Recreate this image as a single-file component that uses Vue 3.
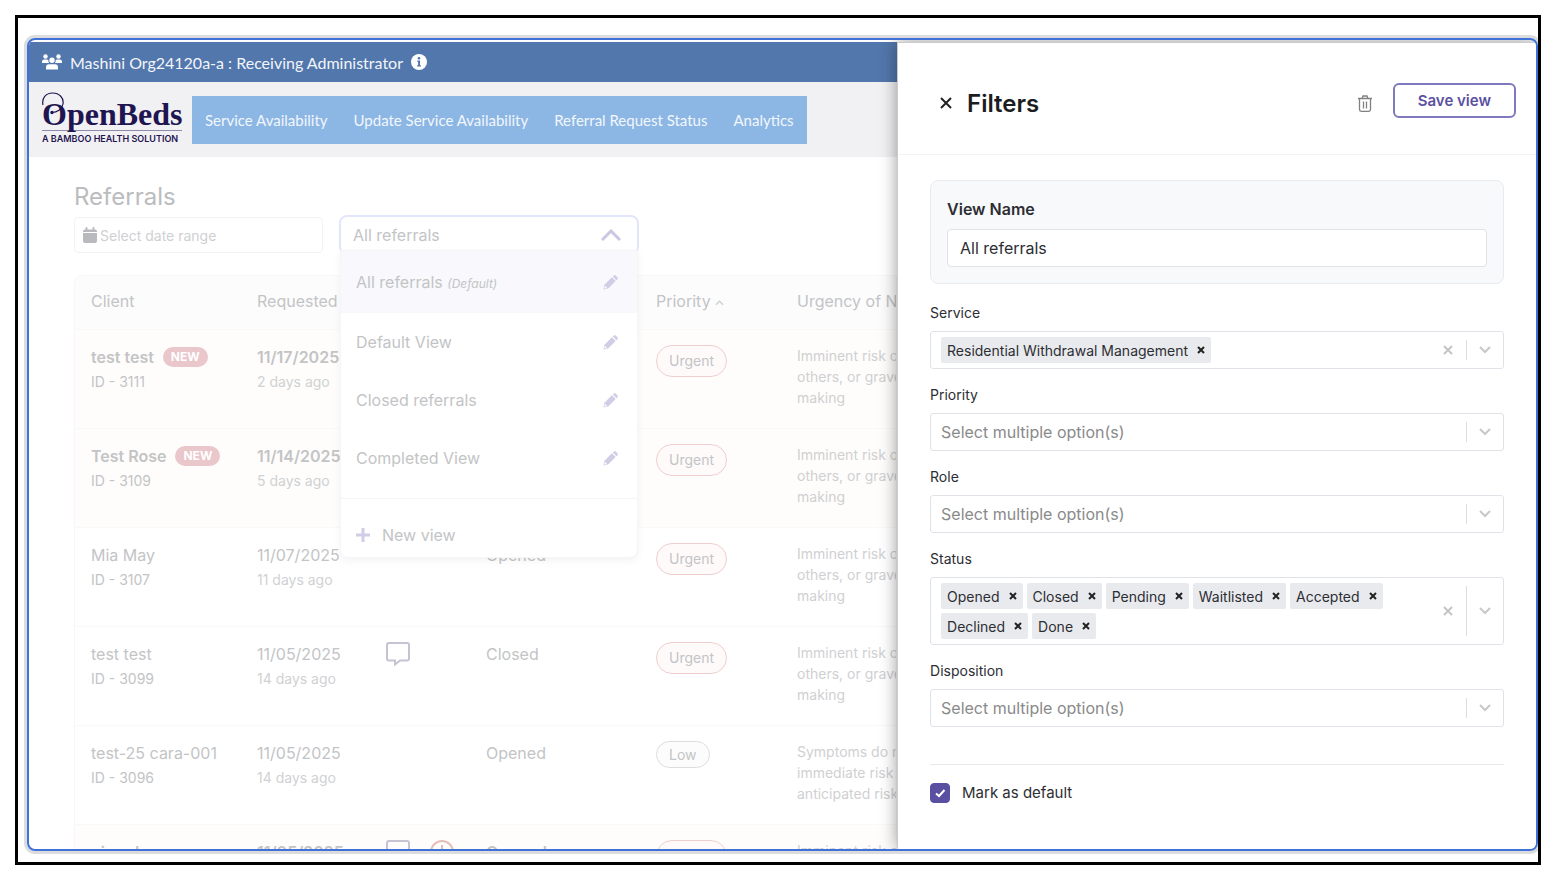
<script setup>
import { ref } from 'vue'

const navLinks = ['Service Availability', 'Update Service Availability', 'Referral Request Status', 'Analytics']

const views = [
  { name: 'All referrals', isDefault: true },
  { name: 'Default View' },
  { name: 'Closed referrals' },
  { name: 'Completed View' },
]

const imminent = ['Imminent risk of', 'others, or grave', 'making']

const referrals = [
  { name: 'test test', id: 'ID - 3111', date: '11/17/2025', ago: '2 days ago', status: 'Opened', priority: 'Urgent', urgency: imminent, isNew: true, unread: true },
  { name: 'Test Rose', id: 'ID - 3109', date: '11/14/2025', ago: '5 days ago', status: 'Opened', priority: 'Urgent', urgency: imminent, isNew: true, unread: true },
  { name: 'Mia May', id: 'ID - 3107', date: '11/07/2025', ago: '11 days ago', status: 'Opened', priority: 'Urgent', urgency: imminent },
  { name: 'test test', id: 'ID - 3099', date: '11/05/2025', ago: '14 days ago', status: 'Closed', priority: 'Urgent', urgency: imminent, message: true },
  { name: 'test-25 cara-001', id: 'ID - 3096', date: '11/05/2025', ago: '14 days ago', status: 'Opened', priority: 'Low', urgency: ['Symptoms do not', 'immediate risk', 'anticipated risk'] },
  { name: 'nirmala', id: 'ID - 3095', date: '11/05/2025', ago: '14 days ago', status: 'Opened', priority: 'Urgent', urgency: imminent, message: true, alert: true, unread: true },
]

const filters = ref([
  { label: 'Service', values: ['Residential Withdrawal Management'] },
  { label: 'Priority', values: [] },
  { label: 'Role', values: [] },
  { label: 'Status', values: ['Opened', 'Closed', 'Pending', 'Waitlisted', 'Accepted', 'Declined', 'Done'] },
  { label: 'Disposition', values: [] },
])

const viewName = ref('All referrals')
const markDefault = ref(true)

// remove one chip from a filter
const removeValue = (filter, value) => {
  filter.values = filter.values.filter((v) => v !== value)
}
</script>

<template>
  <div class="frame">
    <div class="window">
      <div class="main">
        <header class="orgbar">
          <svg class="users" viewBox="0 0 20 16" fill="#fff">
            <circle cx="3.5" cy="2.5" r="2.2" />
            <circle cx="16.5" cy="2.5" r="2.2" />
            <circle cx="10" cy="6.2" r="2.7" />
            <path d="M0 9V7.6Q0 5.4 2.2 5.4H4.8Q6 5.4 6.3 6.2Q6.2 7.9 7.2 9ZM20 9V7.6Q20 5.4 17.8 5.4H15.2Q14 5.4 13.7 6.2Q13.8 7.9 12.8 9ZM4 15.5V13.5Q4 10.2 7 10.2H13Q16 10.2 16 13.5V15.5Z" />
          </svg>
          <span>Mashini Org24120a-a : Receiving Administrator</span>
          <svg class="info" viewBox="0 0 16 16">
            <circle cx="8" cy="8" r="8" fill="#fff" />
            <path d="M6.3 6.5H9V11.2H10V12.5H6.2V11.2H7.1V7.8H6.3Z" fill="#5277ac" />
            <circle cx="8" cy="4.3" r="1.3" fill="#5277ac" />
          </svg>
        </header>

        <div class="navbar">
          <div class="logo">
            <svg class="logo-loop" viewBox="0 0 24 26" fill="none" stroke="#1f1550">
              <path d="M1 13C-.5 6 4 1 10.500 1C17.500 1 22 6 21 12C20 17.500 15 20.500 10 20.500" stroke-width="1.2" />
              <circle cx="10" cy="20.5" r="1.7" fill="#1f1550" stroke="none" />
            </svg>
            <span class="logo-name">OpenBeds</span>
            <span class="logo-tag">A BAMBOO HEALTH SOLUTION</span>
          </div>
          <nav>
            <a v-for="link in navLinks" :key="link" href="#">{{ link }}</a>
          </nav>
        </div>

        <main class="content">
          <h1>Referrals</h1>
          <div class="toolbar">
            <label class="date">
              <svg viewBox="0 0 14 16" fill="#b9babd">
                <path d="M0 4.500Q0 2.500 2 2.500H2.500V1Q2.500 0 3.500 0T4.500 1V2.500H9.500V1Q9.500 0 10.500 0T11.500 1V2.500H12Q14 2.500 14 4.500V5H0ZM0 6H14V14Q14 16 12 16H2Q0 16 0 14Z" />
              </svg>
              <input type="text" aria-label="Date range" placeholder="Select date range" />
            </label>
            <div class="picker">
              <button class="picker-toggle">
                <span>All referrals</span>
                <svg viewBox="0 0 20 12" fill="none" stroke="#cbc7e2" stroke-width="3">
                  <path d="M1 11L10 2L19 11" />
                </svg>
              </button>
              <div class="menu">
                <button v-for="view in views" :key="view.name" class="menu-item" :class="{ active: view.isDefault }">
                  <span>{{ view.name }} <em v-if="view.isDefault">(Default)</em></span>
                  <svg viewBox="0 0 16 16" fill="#d0cde6">
                    <path d="M1.500 10.500L9.500 2.500L13.500 6.500L5.500 14.500L.5 15.500ZM10.500 1.700L11.800.5Q12.600-.3 13.500.5L15.400 2.400Q16.300 3.300 15.500 4.200L14.300 5.500Z" />
                    <path d="M2 11.500L4.500 14L1.500 14.500Z" fill="#fff" />
                  </svg>
                </button>
                <button class="menu-new">
                  <svg viewBox="0 0 14 14" stroke="#d0cde6" stroke-width="3">
                    <path d="M7 0V14M0 7H14" />
                  </svg>
                  <span>New view</span>
                </button>
              </div>
            </div>
          </div>

          <div class="table-box">
            <table>
              <thead>
                <tr>
                  <th class="c-client">Client</th>
                  <th class="c-date">Requested</th>
                  <th class="c-icons"></th>
                  <th class="c-status">Status</th>
                  <th class="c-priority">
                    Priority
                    <svg viewBox="0 0 10 6" fill="none" stroke="#cfd0d2" stroke-width="1.5"><path d="M1 5L5 1L9 5" /></svg>
                  </th>
                  <th>Urgency of Need</th>
                </tr>
              </thead>
              <tbody>
                <tr v-for="row in referrals" :key="row.id" :class="{ unread: row.unread }">
                  <td>
                    <div class="line">{{ row.name }}<span v-if="row.isNew" class="new">NEW</span></div>
                    <div class="sub">{{ row.id }}</div>
                  </td>
                  <td>
                    <div class="line">{{ row.date }}</div>
                    <div class="sub ago">{{ row.ago }}</div>
                  </td>
                  <td>
                    <div class="icons">
                      <svg v-if="row.message" viewBox="0 0 24 24" fill="none" stroke="#c6c3d2" stroke-width="2">
                        <path d="M3 1H21Q23 1 23 3V16.500Q23 18.500 21 18.500H14L9 22.500V18.500H3Q1 18.500 1 16.500V3Q1 1 3 1Z" />
                      </svg>
                      <svg v-if="row.alert" viewBox="0 0 24 24" fill="none" stroke="#e5bdb8" stroke-width="2">
                        <circle cx="12" cy="12" r="11" />
                        <path d="M12 5V14M12 16.500V19" />
                      </svg>
                    </div>
                  </td>
                  <td><div class="line">{{ row.status }}</div></td>
                  <td><span class="pill" :class="{ low: row.priority === 'Low' }">{{ row.priority }}</span></td>
                  <td class="urgency"><div v-for="text in row.urgency" :key="text">{{ text }}</div></td>
                </tr>
              </tbody>
            </table>
          </div>
        </main>
      </div>

      <aside class="panel">
        <div class="panel-head">
          <button aria-label="Close">
            <svg class="close" viewBox="0 0 12 12" stroke="#222" stroke-width="2"><path d="M1 1L11 11M11 1L1 11" /></svg>
          </button>
          <h2>Filters</h2>
          <button aria-label="Delete view">
            <svg class="trash" viewBox="0 0 14 17" fill="none" stroke="#818181" stroke-width="1.3">
              <path d="M0 3.500H14M4 3.500L5 1H9L10 3.500M1.500 3.500V14.500Q1.500 16.300 3.300 16.300H10.700Q12.500 16.300 12.500 14.500V3.500M5.500 6.500V13.500M8.500 6.500V13.500" />
            </svg>
          </button>
          <button class="save">Save view</button>
        </div>

        <div class="panel-body">
          <div class="view-name">
            <label for="view-name">View Name</label>
            <input id="view-name" v-model="viewName" type="text" />
          </div>

          <div v-for="filter in filters" :key="filter.label" class="field">
            <label :for="filter.label">{{ filter.label }}</label>
            <div class="multi">
              <div class="values">
                <span v-for="value in filter.values" :key="value" class="chip">
                  {{ value }}
                  <button :aria-label="'Remove ' + value" @click="removeValue(filter, value)">
                    <svg viewBox="0 0 8 8" stroke="#222" stroke-width="2"><path d="M1 1L7 7M7 1L1 7" /></svg>
                  </button>
                </span>
                <input :id="filter.label" type="text" :placeholder="filter.values.length ? '' : 'Select multiple option(s)'" :class="{ filled: filter.values.length }" />
              </div>
              <button v-if="filter.values.length" class="clear" aria-label="Clear" @click="filter.values = []">
                <svg viewBox="0 0 10 10" stroke="#c4c4c4" stroke-width="2"><path d="M1 1L9 9M9 1L1 9" /></svg>
              </button>
              <span class="separator"></span>
              <button class="arrow" aria-label="Open">
                <svg viewBox="0 0 12 8" fill="none" stroke="#c8c8c8" stroke-width="2"><path d="M1 1L6 6L11 1" /></svg>
              </button>
            </div>
          </div>

          <label class="default">
            <input v-model="markDefault" type="checkbox" />
            <svg viewBox="0 0 20 20" fill="none" stroke="#fff" stroke-width="2"><path d="M6 10.500L9 13L14.500 7" /></svg>
            Mark as default
          </label>
        </div>
      </aside>
    </div>
  </div>
</template>

<style>
body {
  margin: 0;
  background: #fff;
}
</style>

<style scoped>
* {
  box-sizing: border-box;
}

button {
  font: inherit;
  color: inherit;
  background: none;
  border: none;
  padding: 0;
  display: flex;
  align-items: center;
}

input {
  font: inherit;
  color: inherit;
  background: none;
  border: none;
  padding: 0;
  min-width: 0;
  outline: none;
}

svg {
  display: block;
  flex: none;
}

.frame {
  height: calc(100vh - 28px);
  margin: 15px 5px 13px 15px;
  padding: 20px 0 11px 9px;
  border: 3px solid #000;
  display: flex;
  overflow: hidden;
  font-family: Inter, "Liberation Sans", sans-serif;
  font-size: 16px;
}

.window {
  flex: 1;
  min-width: 0;
  display: flex;
  overflow: hidden;
  border: 2px solid #3f72d8;
  border-radius: 8px;
  box-shadow: 0 0 0 3px #dcdcde;
}

.main {
  flex: 1;
  min-width: 0;
  padding-top: 2px;
  overflow: hidden;
}

.orgbar {
  height: 40px;
  padding: 0 13px;
  display: flex;
  align-items: center;
  gap: 8px;
  color: #f2f5fa;
  background: #5277ac;
  font-family: Lato, sans-serif;
}

.orgbar span {
  white-space: nowrap;
}

.users {
  width: 20px;
  height: 16px;
}

.info {
  width: 16px;
  height: 16px;
}

.navbar {
  height: 75px;
  padding: 0 13px;
  display: flex;
  align-items: center;
  gap: 10px;
  background: #f1f1f4;
}

.logo {
  position: relative;
  width: 140px;
  padding-top: 6px;
  color: #1f1550;
  display: flex;
  flex-direction: column;
}

.logo-loop {
  position: absolute;
  left: 0;
  top: 0;
  width: 24px;
  height: 26px;
}

.logo-name {
  font-family: "Liberation Serif", serif;
  font-weight: bold;
  font-size: 32px;
  line-height: 32px;
  border-bottom: 1px solid #8f8aa8;
}

.logo-tag {
  font-size: 9px;
  font-weight: 600;
  line-height: 16px;
  white-space: nowrap;
}

nav {
  height: 48px;
  padding: 0 13px;
  display: flex;
  align-items: center;
  gap: 26px;
  background: #8cb6e4;
}

nav a {
  color: #f2f7fd;
  font-family: Lato, sans-serif;
  font-size: 15px;
  text-decoration: none;
  white-space: nowrap;
}

.content {
  padding: 25px 0 0 45px;
  color: #c3c4c6;
}

h1 {
  margin: 0;
  font-size: 24px;
  font-weight: 400;
  line-height: 30px;
  color: #bbbcbe;
}

.toolbar {
  display: flex;
  align-items: flex-start;
  gap: 16px;
  margin-top: 3px;
}

.date {
  width: 249px;
  height: 36px;
  margin-top: 2px;
  padding: 0 8px;
  display: flex;
  align-items: center;
  gap: 3px;
  border: 1px solid #f3f3f5;
  border-radius: 4px;
  font-size: 14px;
}

.date svg {
  width: 14px;
  height: 16px;
}

.date input {
  flex: 1;
}

.date input::placeholder {
  color: #cfd0d2;
}

.picker {
  position: relative;
  width: 300px;
}

.picker-toggle {
  width: 100%;
  height: 40px;
  padding: 0 16px 0 12px;
  justify-content: space-between;
  border: 2px solid #e2e6fb;
  border-radius: 8px;
}

.picker-toggle svg {
  width: 20px;
  height: 12px;
}

.menu {
  position: absolute;
  z-index: 1;
  top: 35px;
  left: 1px;
  right: 1px;
  background: #fff;
  border: 1px solid #f5f5f7;
  border-radius: 0 0 8px 8px;
  box-shadow: 0 3px 8px rgba(0, 0, 0, 0.05);
}

.menu-item {
  width: 100%;
  height: 58px;
  padding: 0 19px 0 15px;
  justify-content: space-between;
}

.menu-item.active {
  height: 62px;
  background: #f8f8fd;
}

.menu-item em {
  font-size: 12px;
}

.menu-item svg {
  width: 15px;
  height: 15px;
}

.menu-new {
  width: 100%;
  height: 59px;
  margin-top: 11px;
  padding: 14px 15px 0;
  gap: 12px;
  border-top: 1px solid #f5f5f6;
}

.menu-new svg {
  width: 14px;
  height: 14px;
}

.table-box {
  margin-top: 20px;
  border: 1px solid #f7f7f8;
  border-radius: 8px 0 0 0;
  overflow: hidden;
}

table {
  width: 100%;
  border-collapse: collapse;
  table-layout: fixed;
}

th {
  height: 53px;
  padding: 0 0 2px 16px;
  background: #fcfcfd;
  font-weight: 400;
  text-align: left;
  white-space: nowrap;
}

th svg {
  display: inline-block;
  width: 9px;
  height: 6px;
  vertical-align: middle;
}

.c-client {
  width: 166px;
}

.c-date {
  width: 129px;
}

.c-icons {
  width: 100px;
}

.c-status {
  width: 170px;
}

.c-priority {
  width: 141px;
}

td {
  height: 99px;
  padding: 15px 0 0 16px;
  border-top: 1px solid #f8f8f8;
  vertical-align: top;
  white-space: nowrap;
}

.unread td {
  background: #fefdfb;
}

.line {
  display: flex;
  align-items: center;
  gap: 9px;
  line-height: 24px;
}

.unread .line {
  font-weight: 600;
}

.sub {
  font-size: 14px;
  line-height: 26px;
}

.ago {
  color: #d0d1d3;
}

.new {
  padding: 0 8px;
  border-radius: 10px;
  background: #e9c7ca;
  color: #fff;
  font-size: 12px;
  font-weight: 700;
  line-height: 20px;
}

.icons {
  display: flex;
  gap: 20px;
}

.icons svg {
  width: 24px;
  height: 24px;
}

.pill {
  display: inline-block;
  padding: 0 12px;
  border: 1px solid #efcfcd;
  border-radius: 16px;
  background: #fefafa;
  font-size: 14px;
  line-height: 30px;
}

.pill.low {
  border-color: #dcdde0;
  background: #fcfcfc;
  line-height: 25px;
}

.urgency {
  color: #cfd0d2;
  font-size: 14px;
  line-height: 21px;
}

.panel {
  position: relative;
  width: 42.4%;
  margin-top: 2px;
  flex: none;
  background: #fff;
  border-top: 1px solid #ccc;
  border-left: 1px solid #ccc;
  box-shadow: 0 0 16px rgba(0, 0, 0, 0.4);
  color: #2c2e33;
}

.panel-head {
  height: 112px;
  padding: 9px 20px 0 42px;
  display: flex;
  align-items: center;
  border-bottom: 1px solid #f3f3f4;
}

.close {
  width: 12px;
  height: 12px;
}

h2 {
  flex: 1;
  margin: 0 0 0 15px;
  font-size: 24px;
  font-weight: 600;
  color: #1c1d20;
}

.trash {
  width: 14px;
  height: 17px;
}

.save {
  height: 35px;
  margin: 0 0 6px 21px;
  padding: 0 23px;
  border: 2px solid #7f79bd;
  border-radius: 6px;
  color: #5a50a2;
  font-size: 15px;
  font-weight: 600;
}

.panel-body {
  padding: 25px 32px 0;
}

.view-name {
  padding: 16px;
  display: flex;
  flex-direction: column;
  gap: 8px;
  border: 1px solid #e9ebee;
  border-radius: 8px;
  background: #f8f9fb;
}

.view-name label {
  font-weight: 600;
  line-height: 24px;
}

.view-name input {
  height: 38px;
  padding: 0 12px;
  border: 1px solid #dfe2e6;
  border-radius: 4px;
  background: #fff;
}

.field {
  margin-top: 16px;
}

.view-name + .field {
  margin-top: 19px;
}

.field > label {
  display: block;
  margin-bottom: 8px;
  font-size: 14px;
  line-height: 20px;
}

.multi {
  min-height: 38px;
  padding: 5px 0 5px 10px;
  display: flex;
  align-items: center;
  border: 1px solid #dfe2e6;
  border-radius: 3px;
}

.values {
  flex: 1;
  display: flex;
  flex-wrap: wrap;
  gap: 4px;
  padding-right: 40px;
}

.values input {
  flex: 1;
}

.values input.filled {
  flex: 0;
  width: 4px;
}

.values input::placeholder {
  color: #8a8a8a;
}

.chip {
  display: flex;
  align-items: center;
  gap: 9px;
  height: 26px;
  padding: 0 6px;
  border-radius: 2px;
  background: #e9eaee;
  font-size: 14px;
}

.chip svg {
  width: 8px;
  height: 8px;
}

.clear {
  padding: 0 13px;
}

.clear svg {
  width: 10px;
  height: 10px;
}

.separator {
  align-self: stretch;
  width: 1px;
  margin: 3px 0;
  background: #dedede;
}

.arrow {
  padding: 0 12px;
}

.arrow svg {
  width: 12px;
  height: 8px;
}

.default {
  position: relative;
  margin-top: 37px;
  padding-top: 18px;
  display: flex;
  align-items: center;
  gap: 12px;
  border-top: 1px solid #e8e8ea;
  font-size: 15px;
  line-height: 20px;
}

.default input {
  appearance: none;
  width: 20px;
  height: 20px;
  margin: 0;
  border: 1px solid #5a50a2;
  border-radius: 4px;
}

.default input:checked {
  background: #5a50a2;
}

.default svg {
  position: absolute;
  left: 0;
  width: 20px;
  height: 20px;
}
</style>
